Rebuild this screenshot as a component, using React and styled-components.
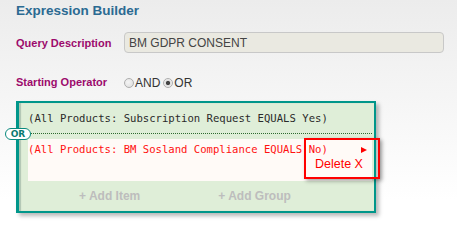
import React from "react";
import styled, { createGlobalStyle } from "styled-components";

const Global = createGlobalStyle`
  html, body { margin: 0; padding: 0; }
  body {
    width: 457px;
    height: 247px;
    overflow: hidden;
    background: linear-gradient(to bottom, #ececec 0px, #ffffff 200px);
    font-family: "Liberation Sans", Arial, sans-serif;
  }
`;

const Page = styled.div`
  padding: 3px 13px 0 16px;
`;

const Title = styled.h2`
  margin: 0;
  height: 26px;
  font-size: 13.5px;
  font-weight: bold;
  color: #2b6a92;
`;

const FieldRow = styled.div`
  display: flex;
  align-items: center;
  margin-top: ${(p) => p.$top || 0}px;
`;

const Label = styled.div`
  width: 108px;
  flex: none;
  font-size: 11px;
  font-weight: bold;
  color: #9c0a6c;
`;

const TextInput = styled.div`
  width: 320px;
  height: 21px;
  box-sizing: border-box;
  border: 1px solid #c8c8c8;
  border-radius: 4px;
  background: #eae9e1;
  font-size: 12px;
  color: #444;
  padding-left: 4px;
  display: flex;
  align-items: center;
`;

const RadioGroup = styled.div`
  display: flex;
  align-items: center;
  font-size: 12px;
  color: #333;
  padding-top: 2px;
`;

const Radio = styled.span`
  width: 10px;
  height: 10px;
  box-sizing: border-box;
  border-radius: 50%;
  border: 1px solid #aeaeae;
  background: ${(p) =>
    p.$on
      ? "radial-gradient(circle, #444 0 1.8px, #dcdcdc 2.4px, #efefef 4px)"
      : "radial-gradient(circle at 40% 40%, #f4f4f4, #dcdcdc)"};
  margin: 0 1px 0 ${(p) => p.$gap || 0}px;
  display: inline-block;
`;

const GroupBox = styled.div`
  position: relative;
  margin-top: 11px;
  width: 360px;
  height: 112px;
  box-sizing: border-box;
  background: #dfeed8;
  border-style: solid;
  border-color: #00968a;
  border-width: 2px 2px 2px 3px;
  box-shadow: 3px 3px 4px rgba(0, 0, 0, 0.28), inset 2px 0 1px rgba(90, 120, 110, 0.35);
  display: flex;
  flex-direction: column;
`;

const RuleText = styled.div`
  font-family: "DejaVu Sans Mono", "Liberation Mono", monospace;
  font-size: 10.6px;
  color: ${(p) => (p.$error ? "#ff1010" : "#2a2a2a")};
  white-space: nowrap;
`;

const FirstRule = styled.div`
  height: 30px;
  display: flex;
  align-items: center;
  border-bottom: 1px dotted #2f6a2f;
  margin: 0 2px 0 9px;
`;

const OrBadge = styled.div`
  position: absolute;
  left: -14px;
  top: 25px;
  width: 26px;
  height: 12px;
  box-sizing: border-box;
  border: 1px solid #0a8a7e;
  border-radius: 7px;
  background: #fff;
  color: #0a7a70;
  font-family: "DejaVu Sans", Verdana, sans-serif;
  font-size: 9px;
  font-weight: bold;
  display: flex;
  align-items: center;
  justify-content: center;
`;

const SecondRule = styled.div`
  position: relative;
  margin: 5px 2px 0 9px;
  height: 42px;
  background: #fffaf7;
  padding-top: 4px;
  box-sizing: border-box;
`;

const Popup = styled.div`
  position: absolute;
  left: 276px;
  top: -1px;
  width: 76px;
  height: 41px;
  box-sizing: border-box;
  border: 2px solid #ff0000;
  box-shadow: 2px 2px 4px rgba(0, 0, 0, 0.35);
`;

const Flag = styled.span`
  position: absolute;
  right: 11px;
  top: 7px;
  width: 0;
  height: 0;
  border-top: 3px solid transparent;
  border-bottom: 3px solid transparent;
  border-left: 6px solid #ff0000;
`;

const DeleteLink = styled.div`
  position: absolute;
  left: 9px;
  top: 17px;
  font-size: 12.5px;
  color: #ff0000;
`;

const Footer = styled.div`
  flex: 1;
  display: flex;
  align-items: center;
  padding-left: 60px;
  gap: 78px;
`;

const AddButton = styled.span`
  font-size: 12px;
  font-weight: bold;
  color: #bdbdbd;
`;

export default function App() {
  return (
    <>
      <Global />
      <Page>
        <Title>Expression Builder</Title>
        <FieldRow $top={3}>
          <Label>Query Description</Label>
          <TextInput>BM GDPR CONSENT</TextInput>
        </FieldRow>
        <FieldRow $top={21}>
          <Label>Starting Operator</Label>
          <RadioGroup>
            <Radio />
            AND
            <Radio $on $gap={3} />
            OR
          </RadioGroup>
        </FieldRow>
        <GroupBox>
          <FirstRule>
            <RuleText>(All Products: Subscription Request EQUALS Yes)</RuleText>
          </FirstRule>
          <OrBadge>OR</OrBadge>
          <SecondRule>
            <RuleText $error>(All Products: BM Sosland Compliance EQUALS No)</RuleText>
            <Popup>
              <Flag />
              <DeleteLink>Delete X</DeleteLink>
            </Popup>
          </SecondRule>
          <Footer>
            <AddButton>+ Add Item</AddButton>
            <AddButton>+ Add Group</AddButton>
          </Footer>
        </GroupBox>
      </Page>
    </>
  );
}
